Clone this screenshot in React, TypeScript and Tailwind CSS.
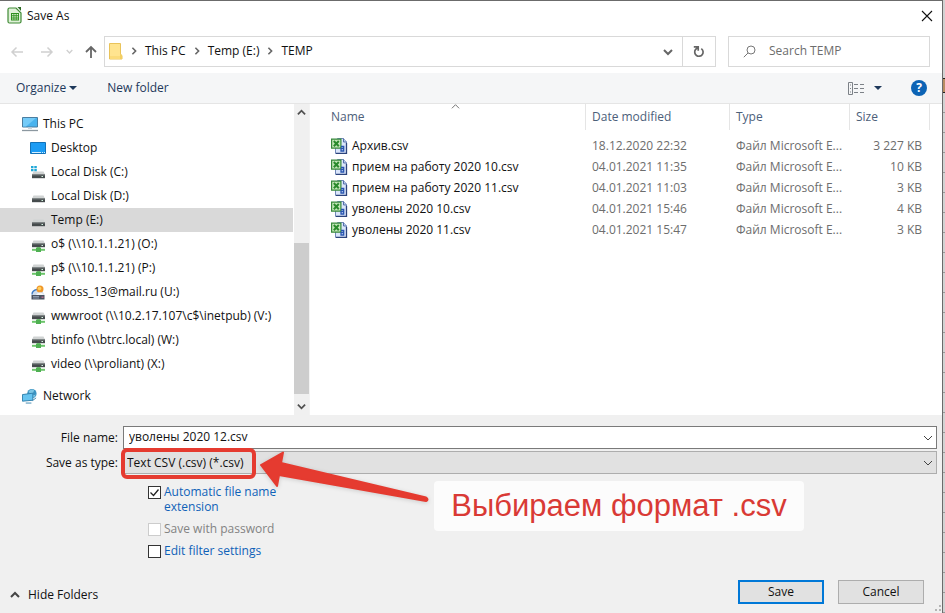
import type { ReactNode } from "react";

type DriveKind = "system" | "local" | "network" | "mail";

const drives: { label: string; kind: DriveKind; selected?: boolean }[] = [
  { label: "Local Disk (C:)", kind: "system" },
  { label: "Local Disk (D:)", kind: "local" },
  { label: "Temp (E:)", kind: "local", selected: true },
  { label: "o$ (\\\\10.1.1.21) (O:)", kind: "network" },
  { label: "p$ (\\\\10.1.1.21) (P:)", kind: "network" },
  { label: "foboss_13@mail.ru (U:)", kind: "mail" },
  { label: "wwwroot (\\\\10.2.17.107\\c$\\inetpub) (V:)", kind: "network" },
  { label: "btinfo (\\\\btrc.local) (W:)", kind: "network" },
  { label: "video (\\\\proliant) (X:)", kind: "network" },
];

const files = [
  { name: "Архив.csv", date: "18.12.2020 22:32", size: "3 227 KB" },
  { name: "прием на работу 2020 10.csv", date: "04.01.2021 11:35", size: "10 KB" },
  { name: "прием на работу 2020 11.csv", date: "04.01.2021 11:03", size: "3 KB" },
  { name: "уволены 2020 10.csv", date: "04.01.2021 15:46", size: "4 KB" },
  { name: "уволены 2020 11.csv", date: "04.01.2021 15:47", size: "3 KB" },
];

function Chevron({ dir, className = "" }: { dir: "up" | "down" | "right"; className?: string }) {
  const d = { up: "M1 7 5 3l4 4", down: "M1 3l4 4 4-4", right: "M3 1l4 4-4 4" }[dir];
  return (
    <svg viewBox="0 0 10 10" className={`shrink-0 ${className}`} fill="none" stroke="currentColor" aria-hidden="true">
      <path d={d} />
    </svg>
  );
}

function CalcLogo() {
  return (
    <svg width="16" height="17" viewBox="0 0 16 17" className="shrink-0" aria-hidden="true">
      <path d="M2.500 1H9l5 5v8.500q0 1.500-1.500 1.500h-10Q1 16 1 14.500v-12Q1 1 2.500 1z" fill="#dff0d8" stroke="#3f8a34" strokeWidth="1.200" />
      <path d="M10.500 0H14v4z" fill="#2c6b23" />
      <path d="M4 6h8v7.500H4z" fill="#2f8f1f" />
      <path d="M5 7h1.500v1.200H5zM7.300 7h1.500v1.200H7.300zM9.600 7h1.500v1.200H9.600zM5 9.200h1.500v1.200H5zM7.300 9.200h1.500v1.200H7.300zM9.600 9.200h1.500v1.200H9.600zM5 11.400h1.500v1.200H5zM7.300 11.400h1.500v1.200H7.300zM9.600 11.400h1.500v1.200H9.600z" fill="#d9f2cf" />
    </svg>
  );
}

function FolderIcon() {
  return (
    <svg width="14" height="17" viewBox="0 0 14 17" className="shrink-0" aria-hidden="true">
      <path d="M.5.500h11v11l1.500 1V16H.5z" fill="#ffe48f" stroke="#e9c35a" />
      <path d="M11 10.500 13 12v4h-2z" fill="#f3cf62" />
      <path d="M1 13h10v3H1z" fill="#fbdb7a" />
    </svg>
  );
}

function ComputerIcon() {
  return (
    <svg width="16" height="16" viewBox="0 0 16 16" className="shrink-0" aria-hidden="true">
      <path d="M.5 1.500h15v9.500H.5z" fill="#49b3ee" stroke="#4a7da0" />
      <path d="M1 2h13L4 10.500H1z" fill="#74cbf8" />
      <path d="M6 11.500h4V13H6z" fill="#c8d4dc" />
      <path d="M0 14.500h16" stroke="#8c98a0" strokeWidth="1.300" />
    </svg>
  );
}

function DesktopIcon() {
  return (
    <svg width="16" height="16" viewBox="0 0 16 16" className="shrink-0" aria-hidden="true">
      <path d="M.5 2.500h15v11H.5z" fill="#1c9cf4" stroke="#1272b8" />
      <path d="M2 12.500h9M12 12.500h1M14 12.500h1" stroke="#d5efff" />
    </svg>
  );
}

function NetworkIcon() {
  return (
    <svg width="16" height="16" viewBox="0 0 17 16" className="shrink-0" aria-hidden="true">
      <circle cx="10.500" cy="5.500" r="5" fill="#3b93c1" />
      <path d="M7 3q3-3 6-1-2 3-1 5 3 0 3-2-1 5-5 5z" fill="#9adcf3" opacity=".7" />
      <path d="M.5 6.500 11.500 5v7.500L.5 13.500z" fill="#66c4f0" stroke="#2f7fab" />
      <path d="M4 15.500h6M11 13l4-3" stroke="#3d87b0" />
    </svg>
  );
}

function DriveIcon({ kind }: { kind: DriveKind }) {
  if (kind === "mail") {
    return (
      <svg width="16" height="16" viewBox="0 0 16 16" className="shrink-0" aria-hidden="true">
        <path d="M1.500 11 4 6.500h8l2.500 4.500z" fill="#cfdcec" />
        <path d="M2 10.500q0-4 5-5" fill="none" stroke="#3a78c4" strokeWidth="1.300" />
        <circle cx="10" cy="5" r="3.500" fill="#f0982a" />
        <circle cx="9.500" cy="4.500" r="1.800" fill="#ffd060" />
        <path d="M6 11q1-2.500 4-2.500t4 2.500z" fill="#f3f6fb" />
        <path d="M1.500 11h13v4.500h-13z" fill="#4a5362" />
        <path d="M3 12.500h6M3 14h6" stroke="#8c99ac" />
        <path d="M11.500 12.500h2v1.500h-2z" fill="#b06a8a" />
      </svg>
    );
  }
  const network = kind === "network";
  return (
    <svg width="16" height="16" viewBox="0 0 16 16" className="shrink-0" aria-hidden="true">
      <g transform={network ? "translate(0 -3)" : undefined}>
        <path d="M3.500 7.500h10l1.500 3H2z" fill="#d0d3d3" />
        <path d="M2 10.300h13v3.900H2z" fill="#454b4c" />
        <path d="M2 10.300h13v1H2z" fill="#858b8c" />
        <path d="M11.500 12h1.500v1h-1.500z" fill="#d5f5e2" />
      </g>
      {network && (
        <>
          <path d="M6.500 11.200h4v2h-4z" fill="#4cae4e" />
          <path d="M2 12.800h13v2H2z" fill="#6cc56b" />
          <path d="M6 12h5v4H6z" fill="#4fb052" />
        </>
      )}
      {kind === "system" && (
        <path d="M1 2h2.500v2.200H1zM4.300 2h2.500v2.200H4.300zM1 5h2.500v2.200H1zM4.300 5h2.500v2.200H4.300z" fill="#20a8d8" />
      )}
    </svg>
  );
}

function CsvIcon() {
  return (
    <svg width="17" height="16" viewBox="0 0 17 16" className="shrink-0" aria-hidden="true">
      <path d="M6.500.500h6L15.500 4v11.500H4.500V3z" fill="#dbe6fb" stroke="#7088b8" />
      <path d="M12.500.500V4h3" fill="#b8c9ee" stroke="#5670a8" />
      <path d="M15.500 5v10.500H5" fill="none" stroke="#2c437c" strokeWidth="1.300" />
      <path d="M.6 1.100h9.300v9H.6z" fill="#c6e8bb" stroke="#37883a" strokeWidth="1.200" />
      <path d="m2.800 3 5 5.300M7.800 3l-5 5.300" stroke="#2a8a2c" strokeWidth="2" />
      <path d="M10 8.500h2.700v4.500H10v-2.500h2.700" fill="none" stroke="#2855b0" strokeWidth="1.300" />
    </svg>
  );
}

function TreeItem({ icon, label, nested, selected }: { icon: ReactNode; label: string; nested?: boolean; selected?: boolean }) {
  return (
    <li>
      <button
        type="button"
        className={`flex h-6 w-full items-center gap-[5px] whitespace-nowrap text-left ${nested ? "pl-[30px]" : "pl-[22px]"} ${selected ? "bg-[#d9d9d9]" : ""}`}
      >
        {icon}
        {label}
      </button>
    </li>
  );
}

function Option({ id, label, checked, disabled }: { id: string; label: string; checked?: boolean; disabled?: boolean }) {
  return (
    <div className="flex items-start gap-[3px]">
      <span className="relative mt-[2px] size-[13px] shrink-0">
        <input
          id={id}
          type="checkbox"
          defaultChecked={checked}
          disabled={disabled}
          className="peer block size-[13px] appearance-none border border-[#333] bg-white disabled:border-[#ccc]"
        />
        <svg viewBox="0 0 13 13" className="pointer-events-none absolute inset-0 hidden peer-checked:block" fill="none" stroke="#222" strokeWidth="1.300" aria-hidden="true">
          <path d="m2.500 6.500 3 3 5-6" />
        </svg>
      </span>
      <label htmlFor={id} className={`w-32 leading-[15px] ${disabled ? "text-[#838383]" : "text-[#0f62b8]"}`}>
        {label}
      </label>
    </div>
  );
}

export default function App() {
  return (
    <div className="flex min-h-screen bg-white font-['Open_Sans','Noto_Sans',sans-serif] text-[12px] leading-4 text-[#111]">
      <div className="flex min-w-0 flex-1 flex-col border-t border-r border-[#6b6b6b]">
        <header className="flex h-[29px] items-center gap-1 pr-[9px] pl-[7px]">
          <CalcLogo />
          <h1>Save As</h1>
          <button type="button" aria-label="Close" className="ml-auto">
            <svg width="12" height="12" viewBox="0 0 12 12" stroke="#111" strokeWidth="1.100" aria-hidden="true">
              <path d="m1 1 10 10M11 1 1 11" />
            </svg>
          </button>
        </header>

        <div className="flex h-[43px] items-center pr-3 pl-[10px]">
          <button type="button" aria-label="Back" className="text-[#d0d0d0]">
            <svg width="14" height="12" viewBox="0 0 14 12" fill="none" stroke="currentColor" strokeWidth="1.500" aria-hidden="true">
              <path d="M13 6H2M6.500 1.500 2 6l4.500 4.500" />
            </svg>
          </button>
          <button type="button" aria-label="Forward" className="ml-4 text-[#d0d0d0]">
            <svg width="14" height="12" viewBox="0 0 14 12" fill="none" stroke="currentColor" strokeWidth="1.500" aria-hidden="true">
              <path d="M1 6h11M7.500 1.500 12 6l-4.500 4.500" />
            </svg>
          </button>
          <button type="button" aria-label="Recent locations" className="ml-3 text-[#d0d0d0]">
            <Chevron dir="down" className="size-[7px] stroke-2" />
          </button>
          <button type="button" aria-label="Up" className="ml-3 text-[#666]">
            <svg width="12" height="14" viewBox="0 0 12 14" fill="none" stroke="currentColor" strokeWidth="1.800" aria-hidden="true">
              <path d="M6 13V2M1 7l5-5 5 5" />
            </svg>
          </button>
          <div className="ml-[7px] flex h-[31px] min-w-0 flex-1 border border-[#d9d9d9]">
            <nav aria-label="Address" className="flex flex-1 items-center gap-[7px] pb-px pl-1">
              <FolderIcon />
              <Chevron dir="right" className="size-2 stroke-2 text-[#666]" />
              <a href="#pc">This PC</a>
              <Chevron dir="right" className="size-2 stroke-2 text-[#666]" />
              <a href="#temp">Temp (E:)</a>
              <Chevron dir="right" className="size-2 stroke-2 text-[#666]" />
              <a href="#folder">TEMP</a>
            </nav>
            <button type="button" aria-label="Previous locations" className="flex w-7 items-center justify-center text-[#666]">
              <Chevron dir="down" className="size-[10px] stroke-2" />
            </button>
            <button type="button" aria-label="Refresh" className="flex w-[33px] items-center justify-center border-l border-[#d9d9d9] text-[#666]">
              <svg width="12" height="13" viewBox="0 0 12 13" fill="none" stroke="currentColor" strokeWidth="1.700" aria-hidden="true">
                <path d="M8.300 3.600A4.200 4.200 0 1 1 2.500 4.600L5 2M.8 1.800H5.200v4" />
              </svg>
            </button>
          </div>
          <label className="ml-3 flex h-[31px] w-[202px] items-center gap-[13px] border border-[#d9d9d9] pb-px pl-[14px]">
            <svg width="13" height="13" viewBox="0 0 13 13" fill="none" stroke="#777" className="shrink-0" aria-hidden="true">
              <circle cx="8" cy="5" r="4" />
              <path d="M5 8 .8 12.200" />
            </svg>
            <input aria-label="Search" placeholder="Search TEMP" className="w-full outline-none placeholder:text-[#6d6d6d]" />
          </label>
        </div>

        <div className="flex h-[31px] items-center border-b border-[#e5e5e5] bg-[#f5f6f7] pr-[15px] pl-4 text-[#1e395b]">
          <button type="button" className="flex items-center gap-[3px]">
            Organize
            <svg width="8" height="4" viewBox="0 0 8 4" fill="currentColor" aria-hidden="true"><path d="M0 0h8L4 4z" /></svg>
          </button>
          <button type="button" className="ml-[30px]">New folder</button>
          <button type="button" aria-label="Change your view" className="ml-auto flex items-center gap-[9px]">
            <svg width="17" height="13" viewBox="0 0 17 13" fill="none" stroke="#7c8187" aria-hidden="true">
              <path d="M.5.500h4v12h-4z" />
              <path d="M2 3h1M2 6.500h1M2 10h1M6 2.500h4M12 2.500h4M6 6.500h4M12 6.500h4M6 10.500h4M12 10.500h4" />
            </svg>
            <svg width="8" height="4" viewBox="0 0 8 4" fill="currentColor" aria-hidden="true"><path d="M0 0h8L4 4z" /></svg>
          </button>
          <button type="button" aria-label="Help" className="ml-[29px] flex size-4 items-center justify-center rounded-full bg-[#0c63b5] text-[12px] font-bold text-white">?</button>
        </div>

        <main className="flex min-h-[311px]">
          <aside className="flex w-[310px] shrink-0 border-r border-[#f3f3f3]">
            <ul className="flex-1 pt-2 pb-[7px]">
              <TreeItem icon={<ComputerIcon />} label="This PC" />
              <TreeItem icon={<DesktopIcon />} label="Desktop" nested />
              {drives.map((d) => (
                <TreeItem key={d.label} icon={<DriveIcon kind={d.kind} />} label={d.label} selected={d.selected} nested />
              ))}
              <li aria-hidden="true" className="h-2" />
              <TreeItem icon={<NetworkIcon />} label="Network" />
            </ul>
            <div className="ml-px flex w-[15px] flex-col bg-[#f0f0f0] text-[#505050]">
              <button type="button" aria-label="Scroll up" className="flex h-[17px] items-center justify-center">
                <Chevron dir="up" className="size-[9px] stroke-2" />
              </button>
              <div className="flex flex-1 flex-col justify-end">
                <div className="h-[151px] bg-[#cdcdcd]" />
              </div>
              <button type="button" aria-label="Scroll down" className="flex h-[21px] items-center justify-center pt-1">
                <Chevron dir="down" className="size-[9px] stroke-2" />
              </button>
            </div>
          </aside>

          <section aria-label="Files" className="min-w-0 flex-1 pl-[21px]">
            <table className="w-full table-fixed text-[#6d6d6d]">
              <colgroup>
                <col />
                <col className="w-36" />
                <col className="w-[120px]" />
                <col className="w-20" />
                <col className="w-3" />
              </colgroup>
              <thead>
                <tr className="h-[31px] text-left align-top text-[#4c607a]">
                  <th scope="col" className="p-0 font-normal">
                    <div className="relative h-[26px] border-r border-[#e5e5e5] py-[5px]">
                      Name
                      <Chevron dir="up" className="absolute top-[-2px] left-[120px] size-[9px] text-[#666]" />
                    </div>
                  </th>
                  <th scope="col" className="p-0 font-normal"><div className="h-[26px] border-r border-[#e5e5e5] py-[5px] pl-[6px]">Date modified</div></th>
                  <th scope="col" className="p-0 font-normal"><div className="h-[26px] border-r border-[#e5e5e5] py-[5px] pl-[6px]">Type</div></th>
                  <th scope="col" className="p-0 font-normal"><div className="h-[26px] border-r border-[#e5e5e5] py-[5px] pl-[6px]">Size</div></th>
                  <td />
                </tr>
              </thead>
              <tbody>
                {files.map((f) => (
                  <tr key={f.name} className="h-[21px] whitespace-nowrap">
                    <td className="p-0 text-[#111]"><span className="flex items-center gap-1"><CsvIcon />{f.name}</span></td>
                    <td className="p-0 pl-[6px]">{f.date}</td>
                    <td className="p-0 pl-[6px]">Файл Microsoft E...</td>
                    <td className="p-0 pr-2 text-right">{f.size}</td>
                    <td />
                  </tr>
                ))}
              </tbody>
            </table>
          </section>
        </main>

        <footer className="relative flex flex-1 flex-col bg-[#f0f0f0] pt-[11px]">
          <div className="grid grid-cols-[118px_1fr] items-center gap-x-[5px] gap-y-[2px] pr-[5px]">
            <label htmlFor="file-name" className="text-right">File name:</label>
            <div className="relative">
              <input id="file-name" defaultValue="уволены 2020 12.csv" className="block h-[23px] w-full border border-[#7a7a7a] bg-white pr-6 pb-[2px] pl-[5px] outline-none" />
              <Chevron dir="down" className="pointer-events-none absolute top-[7px] right-1 size-[10px] text-[#444]" />
            </div>
            <label htmlFor="file-type" className="text-right">Save as type:</label>
            <div className="relative">
              <select id="file-type" className="block h-[23px] w-full appearance-none border border-[#adadad] bg-[#e1e1e1] pr-6 pl-[3px] outline-none">
                <option>Text CSV (.csv) (*.csv)</option>
              </select>
              <Chevron dir="down" className="pointer-events-none absolute top-[7px] right-1 size-[10px] text-[#444]" />
              <div className="pointer-events-none absolute top-[-3px] left-[-2px] h-[31px] w-[135px] rounded-md border-4 border-[#e53b30]" />
              <svg width="172" height="54" viewBox="0 0 172 54" className="pointer-events-none absolute top-0 left-[136px] drop-shadow-sm" aria-hidden="true">
                <path d="M2 14 24 1.500 22 12 167 46.500q3 2 0 3.500L20 24 18 35z" fill="#e53b30" stroke="#e53b30" strokeWidth="2" strokeLinejoin="round" />
              </svg>
              <p className="pointer-events-none absolute top-[30px] left-[311px] flex h-[50px] w-[370px] items-center justify-center rounded-sm bg-[#fcfcfc] font-['Liberation_Sans',Arial,sans-serif] text-[31px] leading-9 whitespace-nowrap text-[#d93a35]">
                Выбираем формат .csv
              </p>
            </div>
          </div>

          <div className="mt-[10px] ml-[148px] flex flex-col gap-[7px]">
            <Option id="auto-ext" label="Automatic file name extension" checked />
            <Option id="password" label="Save with password" disabled />
            <Option id="filter" label="Edit filter settings" />
          </div>

          <div className="mt-auto flex items-center pr-[18px] pb-[9px] pl-[10px]">
            <button type="button" className="mt-[6px] flex items-center gap-2">
              <Chevron dir="up" className="size-[10px] stroke-2 text-[#444]" />
              Hide Folders
            </button>
            <button type="button" className="ml-auto h-6 w-[86px] border-2 border-[#0078d7] bg-[#e1e1e1]">Save</button>
            <button type="button" className="ml-[14px] h-6 w-[86px] border border-[#adadad] bg-[#e1e1e1]">Cancel</button>
          </div>
          <svg width="8" height="8" viewBox="0 0 8 8" fill="#b5b5b5" className="absolute right-0 bottom-0" aria-hidden="true">
            <path d="M5 0h2v2H5zM5 4h2v2H5zM1 4h2v2H1z" />
          </svg>
        </footer>
      </div>
      <div aria-hidden="true" className="flex w-[2px] flex-col bg-[#d2d2d2]">
        <div className="mt-[78px] h-[15px] border-y border-[#222] bg-[#b98d62]" />
        <div className="flex-1 bg-[repeating-linear-gradient(#d2d2d2_0px,#d2d2d2_19px,#999_19px,#999_20px)]" />
      </div>
    </div>
  );
}
